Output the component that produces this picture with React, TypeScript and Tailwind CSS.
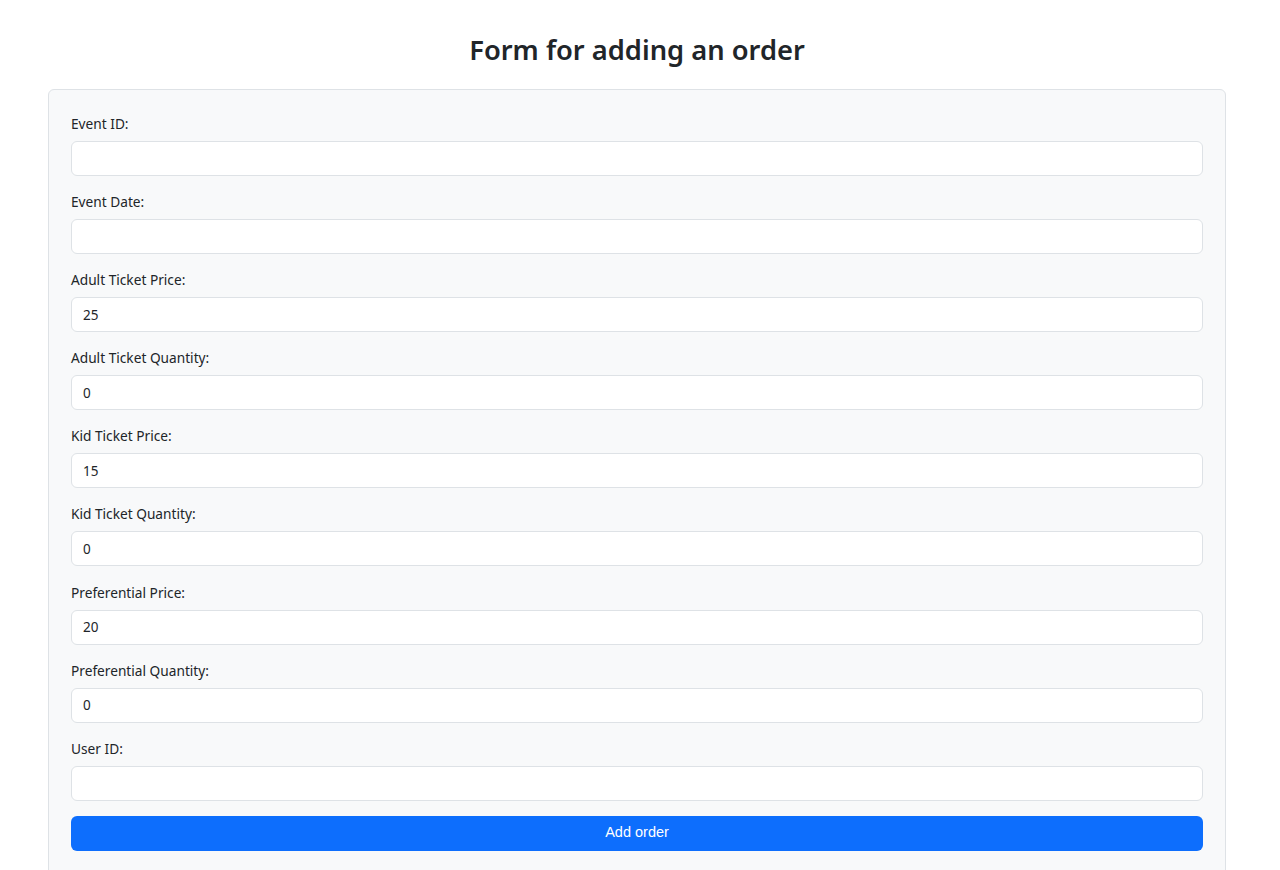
import React from "react";

const fields: { label: string; value: string }[] = [
  { label: "Event ID:", value: "" },
  { label: "Event Date:", value: "" },
  { label: "Adult Ticket Price:", value: "25" },
  { label: "Adult Ticket Quantity:", value: "0" },
  { label: "Kid Ticket Price:", value: "15" },
  { label: "Kid Ticket Quantity:", value: "0" },
  { label: "Preferential Price:", value: "20" },
  { label: "Preferential Quantity:", value: "0" },
  { label: "User ID:", value: "" },
];

export default function App() {
  return (
    <div
      className="min-h-[870px] bg-white text-[#212529]"
      style={{ fontFamily: '"Noto Sans", "Open Sans", sans-serif' }}
    >
      <div className="w-[1178px] ml-[48px] pt-[30px]">
        <h2 className="text-center text-[27.3px] font-semibold leading-[40px] mb-[19px]">
          Form for adding an order
        </h2>
        <div className="bg-[#f8f9fa] border border-[#dee2e6] rounded-[6px] px-[22px] pt-[23px] pb-[24px]">
          {fields.map((f) => (
            <div key={f.label} className="mb-[15.1px]">
              <label className="block text-[13.7px] leading-[21px] mb-[7px]">{f.label}</label>
              <input
                type="text"
                defaultValue={f.value}
                className="block w-full h-[35px] bg-white border border-[#dee2e6] rounded-[6px] px-[11px] text-[13.5px] text-[#212529] outline-none"
              />
            </div>
          ))}
          <button
            className="block w-full h-[35px] mt-[1px] bg-[#0d6efd] rounded-[6px] text-white text-[14.5px]"
            style={{ fontFamily: '"Liberation Sans", Arial, sans-serif' }}
          >
            Add order
          </button>
        </div>
      </div>
    </div>
  );
}
